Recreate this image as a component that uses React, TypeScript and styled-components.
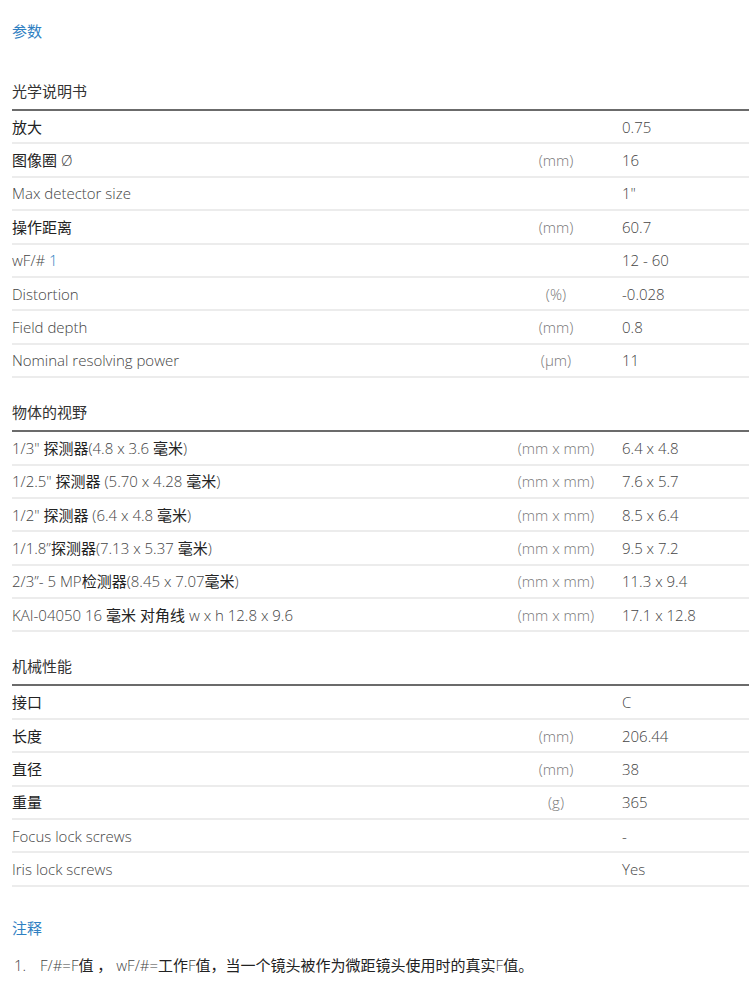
import React from 'react';
import styled, { createGlobalStyle } from 'styled-components';

const GlobalStyle = createGlobalStyle`
  html, body {
    margin: 0;
    padding: 0;
    background: #fff;
    overflow: hidden;
  }
  body {
    font-family: 'Open Sans', 'Noto Sans CJK SC', sans-serif;
    font-size: 15px;
    font-weight: 300;
    color: #444;
  }
`;

const Page = styled.main`
  padding: 21px 0 0 12px;
`;

const BlueTitle = styled.h2<{ $gap?: number }>`
  margin: 0 0 ${(p) => p.$gap ?? 16}px;
  font-size: 15px;
  line-height: 20px;
  font-weight: 400;
  color: #2f80c2;
`;

const Section = styled.section<{ $top?: number }>`
  padding-top: ${(p) => p.$top ?? 24}px;
`;

const SectionHeader = styled.div`
  font-weight: 400;
  color: #333;
  line-height: 20px;
  padding-bottom: 8px;
  border-bottom: 2px solid #6b6b6b;
`;

const Row = styled.div`
  display: grid;
  grid-template-columns: 1fr 100px 143px;
  align-items: center;
  min-height: 31.4px;
  line-height: 20px;
  border-bottom: 2px solid #ececec;
`;

const Label = styled.div`
  color: #444;
`;

const Unit = styled.div`
  text-align: center;
  color: #777;
`;

const Value = styled.div`
  padding-left: 16px;
  color: #444;
`;

const Link = styled.span`
  color: #2f80c2;
`;

const Cjk = styled.span`
  font-weight: 400;
  color: #222;
`;

const NoteItem = styled.div`
  display: flex;
  line-height: 20px;
  color: #444;
`;

const NoteNumber = styled.span`
  width: 26px;
  padding-left: 2px;
`;

const cjkRun = /([\u3000-\u303f\u4e00-\u9fff\uff00-\uffef]+)/;

function mix(text: string) {
  return text.split(cjkRun).map((part, i) =>
    i % 2 === 1 ? <Cjk key={i}>{part}</Cjk> : <React.Fragment key={i}>{part}</React.Fragment>
  );
}

type Spec = { label: React.ReactNode; unit?: string; value: string };

const optics: Spec[] = [
  { label: '放大', value: '0.75' },
  { label: '图像圈 Ø', unit: '(mm)', value: '16' },
  { label: 'Max detector size', value: '1"' },
  { label: '操作距离', unit: '(mm)', value: '60.7' },
  { label: <>wF/# <Link>1</Link></>, value: '12 - 60' },
  { label: 'Distortion', unit: '(%)', value: '-0.028' },
  { label: 'Field depth', unit: '(mm)', value: '0.8' },
  { label: 'Nominal resolving power', unit: '(μm)', value: '11' },
];

const fields: Spec[] = [
  { label: '1/3" 探测器(4.8 x 3.6 毫米)', unit: '(mm x mm)', value: '6.4 x 4.8' },
  { label: '1/2.5" 探测器 (5.70 x 4.28 毫米)', unit: '(mm x mm)', value: '7.6 x 5.7' },
  { label: '1/2" 探测器 (6.4 x 4.8 毫米)', unit: '(mm x mm)', value: '8.5 x 6.4' },
  { label: '1/1.8”探测器(7.13 x 5.37 毫米)', unit: '(mm x mm)', value: '9.5 x 7.2' },
  { label: '2/3”- 5 MP检测器(8.45 x 7.07毫米)', unit: '(mm x mm)', value: '11.3 x 9.4' },
  { label: 'KAI-04050 16 毫米 对角线 w x h 12.8 x 9.6', unit: '(mm x mm)', value: '17.1 x 12.8' },
];

const mechanics: Spec[] = [
  { label: '接口', value: 'C' },
  { label: '长度', unit: '(mm)', value: '206.44' },
  { label: '直径', unit: '(mm)', value: '38' },
  { label: '重量', unit: '(g)', value: '365' },
  { label: 'Focus lock screws', value: '-' },
  { label: 'Iris lock screws', value: 'Yes' },
];

function SpecTable({ title, rows }: { title: string; rows: Spec[] }) {
  return (
    <Section>
      <SectionHeader>{title}</SectionHeader>
      {rows.map((r, i) => (
        <Row key={i}>
          <Label>{typeof r.label === 'string' ? mix(r.label) : r.label}</Label>
          <Unit>{r.unit ?? ''}</Unit>
          <Value>{r.value}</Value>
        </Row>
      ))}
    </Section>
  );
}

export default function App() {
  return (
    <>
      <GlobalStyle />
      <Page>
        <BlueTitle>参数</BlueTitle>
        <SpecTable title="光学说明书" rows={optics} />
        <SpecTable title="物体的视野" rows={fields} />
        <SpecTable title="机械性能" rows={mechanics} />
        <Section $top={31}>
          <BlueTitle $gap={17}>注释</BlueTitle>
          <NoteItem>
            <NoteNumber>1.</NoteNumber>
            <span>{mix('F/#=F值 ， wF/#=工作F值，当一个镜头被作为微距镜头使用时的真实F值。')}</span>
          </NoteItem>
        </Section>
      </Page>
    </>
  );
}
